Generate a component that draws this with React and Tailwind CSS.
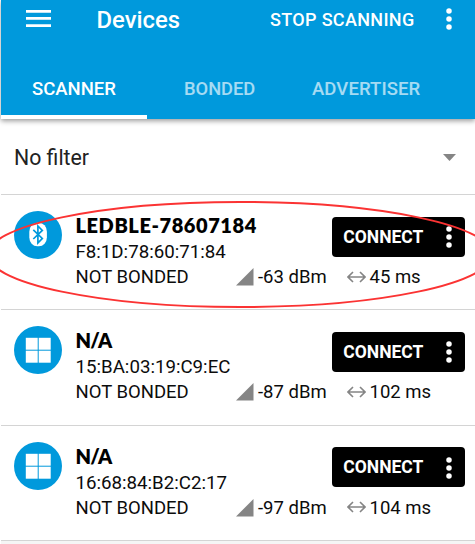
import React from "react";

const devices = [
  { name: "LEDBLE-78607184", tracking: "tracking-[0.57px]", mac: "F8:1D:78:60:71:84", rssi: "-63 dBm", interval: "45 ms", icon: "bluetooth" },
  { name: "N/A", tracking: "tracking-[-0.7px]", mac: "15:BA:03:19:C9:EC", rssi: "-87 dBm", interval: "102 ms", icon: "windows" },
  { name: "N/A", tracking: "tracking-[-0.7px]", mac: "16:68:84:B2:C2:17", rssi: "-97 dBm", interval: "104 ms", icon: "windows" },
];

function Dots() {
  return (
    <svg width="6" height="22" viewBox="0 0 6 22" fill="#fff" className="shrink-0">
      <circle cx="3" cy="3" r="2.75" />
      <circle cx="3" cy="11" r="2.75" />
      <circle cx="3" cy="19" r="2.75" />
    </svg>
  );
}

function DeviceIcon({ kind }) {
  return (
    <svg width="48" height="48" viewBox="0 0 48 48" className="mr-[0.5px] shrink-0">
      <circle cx="24" cy="24" r="24" fill="#0099dc" />
      {kind === "bluetooth" ? (
        <>
          <rect x="15.3" y="11.7" width="17.6" height="23.6" rx="8" ry="9" fill="#fff" />
          <path d="M19.3 18.9l9 8.6-4.4 4.4V15l4.4 4.4-9 8.6" fill="none" stroke="#0099dc" strokeWidth="1.7" />
        </>
      ) : (
        <g fill="#fff">
          <rect x="11.8" y="11.8" width="11.9" height="11.9" />
          <rect x="24.7" y="11.8" width="12" height="11.9" />
          <rect x="11.8" y="24.7" width="11.9" height="12" />
          <rect x="24.7" y="24.7" width="12" height="12" />
        </g>
      )}
    </svg>
  );
}

function Device({ d }) {
  return (
    <div className="flex h-[115.3px] border-b border-[#d4d4d4] pl-[13px] pt-4">
      <DeviceIcon kind={d.icon} />
      <div className="ml-[13px] flex w-[389.8px] shrink-0 flex-col">
        <div className="flex h-[56px] justify-between">
          <div>
            <div className={"h-[28px] font-['Lato','Liberation_Sans',sans-serif] text-[20px] font-extrabold leading-[28px] text-black " + d.tracking}>{d.name}</div>
            <div className="text-[18.7px] leading-[26px]">{d.mac}</div>
          </div>
          <button className="mt-[5.5px] flex h-[40px] w-[133px] items-center justify-between rounded-[4px] bg-black pl-[11px] pr-[13px] pt-px text-[17.5px] font-bold text-white">
            <span>CONNECT</span>
            <Dots />
          </button>
        </div>
        <div className="flex h-[20px] items-center text-[18.5px] leading-5">
          <span className="w-[160.5px]">NOT BONDED</span>
          <svg width="18" height="18" viewBox="0 0 18 18" className="shrink-0"><path d="M0 17.5L17.5 0v17.5z" fill="#858585" /></svg>
          <span className="ml-[4px] w-[88.5px] whitespace-nowrap">{d.rssi}</span>
          <svg width="19" height="12" viewBox="0 0 19 12" fill="none" stroke="#858585" strokeWidth="1.6" className="mb-px shrink-0"><path d="M1 6h17M6 1L1 6l5 5M13 1l5 5-5 5" /></svg>
          <span className="ml-[4px] whitespace-nowrap">{d.interval}</span>
        </div>
      </div>
    </div>
  );
}

export default function App() {
  return (
    <div className="relative h-[544px] w-[475px] overflow-hidden bg-white pl-px font-['Roboto','Liberation_Sans',sans-serif] text-[#0c0c0c]">
      <header className="relative h-[119px] bg-[#0099dc] text-white shadow-[0_2px_5px_rgba(0,0,0,0.4)]">
        <div className="flex h-[58px] items-start pl-[25px]">
          <svg width="25" height="17" viewBox="0 0 25 17" fill="#fff" className="mt-[10px]">
            <path d="M0 0h25v2.7H0zM0 7.1h25v2.7H0zM0 14.2h25v2.7H0z" />
          </svg>
          <h1 className="ml-[45.5px] mt-[4px] w-[173.5px] text-[23.8px] font-medium leading-8">Devices</h1>
          <span className="mt-[8px] w-[176px] whitespace-nowrap text-[18px] font-medium leading-6 tracking-[0.33px]">STOP SCANNING</span>
          <div className="mt-[8px]"><Dots /></div>
        </div>
        <nav className="flex h-[61px] text-[18.5px] font-medium">
          <div className="w-[146px] border-b-4 border-white pl-[31px] pt-[17px] leading-7">SCANNER</div>
          <div className="w-[146px] pl-[37px] pt-[17px] text-[18.3px] leading-7 text-white/65">BONDED</div>
          <div className="pl-[19px] pt-[17px] leading-7 tracking-[0.1px] text-white/65">ADVERTISER</div>
        </nav>
      </header>
      <div className="flex h-[76px] items-center justify-between border-b border-[#d4d4d4] pl-[13px] pr-[19px] pt-[2px] text-[21.3px] text-[#222]">
        <span>No filter</span>
        <svg width="13" height="7" viewBox="0 0 13 7"><path d="M0 0h13L6.5 7z" fill="#858585" /></svg>
      </div>
      <main>
        {devices.map((d, i) => <Device key={i} d={d} />)}
      </main>
      <div className="h-[4px] bg-[#f5f5f5]" />
      <svg className="absolute left-0 top-0" width="475" height="544" viewBox="0 0 475 544">
        <ellipse cx="240" cy="254.5" rx="252" ry="52.5" fill="none" stroke="#fb3333" strokeWidth="2" />
      </svg>
    </div>
  );
}
